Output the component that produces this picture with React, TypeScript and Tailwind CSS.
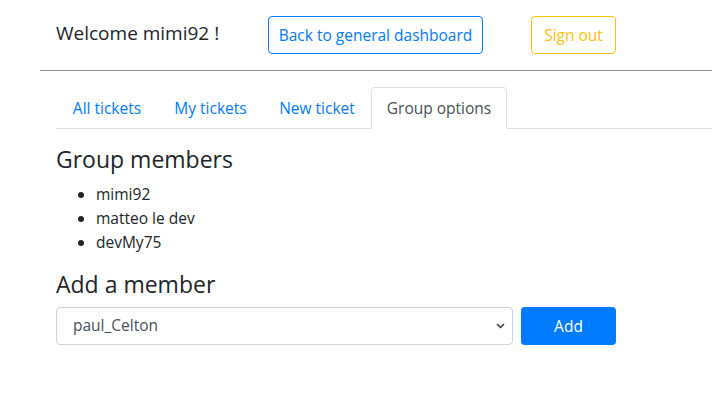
import React, { useState } from "react";

const tabs = [
  { label: "All tickets", width: "w-[102px]" },
  { label: "My tickets", width: "w-[105px]" },
  { label: "New ticket", width: "w-[108px]" },
  { label: "Group options", width: "w-[136px]" },
];

const members = ["mimi92", "matteo le dev", "devMy75"];

const App = () => {
  const [active, setActive] = useState("Group options");
  const [candidate, setCandidate] = useState("paul_Celton");

  return (
    <div className="min-h-screen bg-white pl-10 font-['Open_Sans',sans-serif] text-[#212529]">
      <div className="flex items-start pt-4 pl-4">
        <h5 className="mt-[5px] w-[212px] text-[19px] leading-[24px]">Welcome mimi92 !</h5>
        <button className="h-[38px] w-[215px] rounded border border-[#007bff] pt-[2px] text-[15.5px] text-[#007bff]">
          Back to general dashboard
        </button>
        <button className="ml-12 h-[38px] w-[85px] rounded border border-[#ffc107] pt-[2px] text-[15.5px] text-[#ffc107]">
          Sign out
        </button>
      </div>

      <hr className="mt-4 border-0 border-t border-[#8c8c8c]" />

      <div className="mt-4 ml-4">
        <nav className="flex border-b border-[#dee2e6]">
          {tabs.map((t) => (
            <button
              key={t.label}
              onClick={() => setActive(t.label)}
              className={
                active === t.label
                  ? `${t.width} -mb-px h-[42px] rounded-t border border-[#dee2e6] border-b-white bg-white pt-[2px] text-[15.5px] text-[#495057]`
                  : `${t.width} -mb-px h-[42px] rounded-t border border-transparent pt-[2px] text-[15.5px] text-[#007bff]`
              }
            >
              {t.label}
            </button>
          ))}
        </nav>

        <h4 className="mt-4 mb-2 text-[23px] leading-[28.8px]">Group members</h4>
        <ul className="mb-4 list-disc pl-10 text-[15.5px] leading-6">
          {members.map((m) => (
            <li key={m}>{m}</li>
          ))}
        </ul>

        <h4 className="mb-2 text-[23px] leading-[28.8px]">Add a member</h4>
        <div className="flex gap-2">
          <div className="relative w-[457px]">
            <select
              value={candidate}
              onChange={(e) => setCandidate(e.target.value)}
              className="h-[38px] w-full appearance-none rounded border border-[#ced4da] bg-white pl-4 pt-px text-[15.5px] text-[#495057] outline-none"
            >
              <option value="paul_Celton">paul_Celton</option>
              <option value="lucie_dev">lucie_dev</option>
            </select>
            <svg
              className="pointer-events-none absolute right-[8px] top-[16px]"
              width="9"
              height="6"
              viewBox="0 0 9 6"
              fill="none"
            >
              <path d="M1 1l3.5 3.5L8 1" stroke="#343a40" strokeWidth="1.5" />
            </svg>
          </div>
          <button className="h-[38px] w-[95px] rounded bg-[#007bff] pt-[2px] text-[15.5px] text-white">Add</button>
        </div>
      </div>
    </div>
  );
};

export default App;
